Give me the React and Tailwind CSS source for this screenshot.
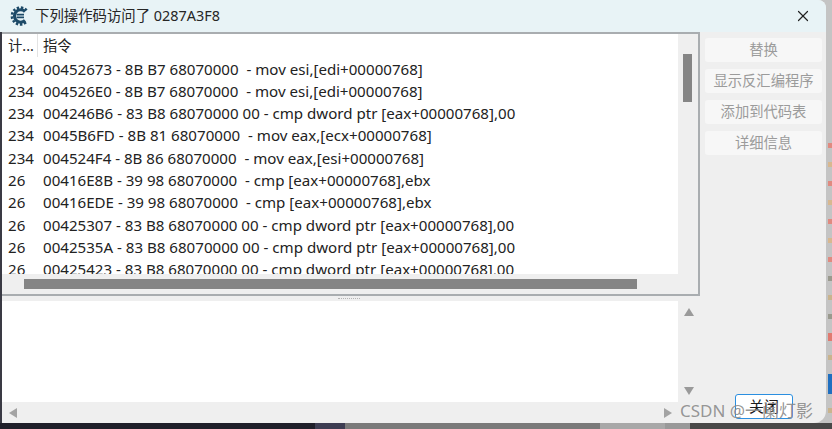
import { X } from 'lucide-react'

const rows = [
  ['234', '00452673 - 8B B7 68070000  - mov esi,[edi+00000768]'],
  ['234', '004526E0 - 8B B7 68070000  - mov esi,[edi+00000768]'],
  ['234', '004246B6 - 83 B8 68070000 00 - cmp dword ptr [eax+00000768],00'],
  ['234', '0045B6FD - 8B 81 68070000  - mov eax,[ecx+00000768]'],
  ['234', '004524F4 - 8B 86 68070000  - mov eax,[esi+00000768]'],
  ['26', '00416E8B - 39 98 68070000  - cmp [eax+00000768],ebx'],
  ['26', '00416EDE - 39 98 68070000  - cmp [eax+00000768],ebx'],
  ['26', '00425307 - 83 B8 68070000 00 - cmp dword ptr [eax+00000768],00'],
  ['26', '0042535A - 83 B8 68070000 00 - cmp dword ptr [eax+00000768],00'],
  ['26', '00425423 - 83 B8 68070000 00 - cmp dword ptr [eax+00000768],00'],
]

const buttons = ['替换', '显示反汇编程序', '添加到代码表', '详细信息']

// scraps of the window behind, seen down the right edge
const stripMarks = [
  ['#e08a80', 5], ['#d8b890', 5], ['#e08a80', 5], ['#d8b890', 5], ['#e08a80', 5], ['#d8b890', 5], ['#e08a80', 5],
  ['#9a9a8e', 5], ['#c9b48e', 5], ['#9a9a8e', 5], ['#e07a70', 8], ['#c9b48e', 5], ['#1f6fc0', 20], ['#c9b48e', 5], ['#9a9a8e', 5],
]

function Logo() {
  return (
    <svg width="20" height="20" viewBox="0 0 20 20" fill="none" stroke="#1d4a68">
      <path d="M16.6 4.4A8.4 8.4 0 1 0 16.6 15.6" strokeWidth="2.6" strokeDasharray="2.4 1.7" />
      <path d="M15 5.6A6.2 6.2 0 1 0 15 14.4" strokeWidth="3" />
      <path d="M6.5 8.6H14M6.5 11.4H14" strokeWidth="1.6" />
    </svg>
  )
}

function Arrow({ dir }) {
  const points = {
    up: '0,8 5,0 10,8',
    down: '0,0 10,0 5,8',
    left: '8,0 8,10 0,5',
    right: '0,0 0,10 8,5',
  }
  const vertical = dir === 'up' || dir === 'down'
  return (
    <svg width={vertical ? 10 : 8} height={vertical ? 8 : 10} className="shrink-0">
      <polygon points={points[dir]} fill={vertical ? '#9a9a9a' : '#a3a3a3'} />
    </svg>
  )
}

export default function App() {
  return (
    <div className="relative flex flex-col w-[832px] h-[429px] overflow-hidden bg-[#c4c4c4] text-[14.3px] text-[#222] font-['Noto_Sans','Noto_Sans_CJK_SC',sans-serif]">
      <div className="flex flex-1 min-h-0">
        {/* Window */}
        <div className="flex flex-col w-[826px] bg-[#efefef] rounded-tr-lg rounded-br-xl overflow-hidden">
          {/* Title bar */}
          <div className="flex items-center h-[32px] shrink-0 bg-[#e8f3f6] pl-[10px] pr-[14px]">
            <Logo />
            <span className="ml-[5px] pb-[1px] text-[14.4px] text-[#262626]">下列操作码访问了 0287A3F8</span>
            <X size={18} strokeWidth={1.6} className="ml-auto text-[#222]" />
          </div>

          <div className="flex flex-1 min-h-0 border-l-2 border-[#3a3a44]">
            <div className="flex flex-col w-[698px] shrink-0">
              {/* Access list */}
              <div className="flex flex-col h-[264px] shrink-0 border-t-2 border-r-2 border-b-2 border-[#a9adb0] bg-[#efefef]">
                <div className="flex flex-1 min-h-0">
                  <div className="flex flex-col w-[676px] bg-white overflow-hidden">
                    <div className="flex items-center h-[25px] shrink-0 pb-[2px]">
                      <span className="flex items-center h-full w-[36px] pl-[6px] border-r border-[#e3e3e3]">计...</span>
                      <span className="pl-[5px]">指令</span>
                    </div>
                    {rows.map((row, i) => (
                      <div key={i} className="flex items-center h-[22.3px] shrink-0 pb-[2px] whitespace-pre leading-none text-[15.1px]">
                        <span className="w-[41px] shrink-0 pl-[6px]">{row[0]}</span>
                        <span>{row[1]}</span>
                      </div>
                    ))}
                  </div>
                  <div className="flex-1 pl-[5px] pt-[20px]">
                    <div className="w-[9px] h-[48px] bg-[#858585]" />
                  </div>
                </div>
                <div className="flex items-center h-[20px] shrink-0 pl-[22px]">
                  <div className="w-[613px] h-[10px] bg-[#858585]" />
                </div>
              </div>

              {/* Splitter */}
              <div className="flex items-center justify-center h-[5px] shrink-0 pr-[4px]">
                <div className="w-[22px] border-t border-dotted border-[#b4b4b4]" />
              </div>

              {/* Lower memo */}
              <div className="flex flex-1 min-h-0 flex-col">
                <div className="flex flex-1 min-h-0">
                  <div className="w-[676px] bg-white" />
                  <div className="flex flex-1 flex-col items-center justify-between pt-[7px] pb-[7px]">
                    <Arrow dir="up" />
                    <Arrow dir="down" />
                  </div>
                </div>
                <div className="flex items-center justify-between h-[21px] shrink-0 pl-[7px] pr-[28px]">
                  <Arrow dir="left" />
                  <Arrow dir="right" />
                </div>
              </div>
            </div>

            {/* Buttons */}
            <div className="flex flex-col flex-1 pl-[5px] pr-[4px] pt-[6px] pb-[4px]">
              {buttons.map((label) => (
                <div key={label} className="flex items-center justify-center h-[24px] mb-[7px] pb-[1px] rounded-[3px] bg-[#f7f7f7] text-[#9b9b9b]">
                  {label}
                </div>
              ))}
              <div className="flex items-center justify-center self-start ml-[30px] mt-auto w-[58px] h-[25px] rounded-[3px] bg-white border border-[#2b8fe0] text-[15px] text-[#1b1b1b]">
                关闭
              </div>
            </div>
          </div>
        </div>

        {/* Window behind, right edge */}
        <div className="flex flex-col flex-1 gap-[14px] pt-[143px] items-end">
          {stripMarks.map(([color, height], i) => (
            <div key={i} className="w-[4px] shrink-0" style={{ backgroundColor: color, height }} />
          ))}
        </div>
      </div>

      {/* Desktop behind, bottom edge */}
      <div className="flex h-[6px] shrink-0">
        <div className="w-[315px] bg-[#1f1f29]" />
        <div className="w-[30px] bg-[#3d3d52]" />
        <div className="w-[255px] bg-[#7a7a7a]" />
        <div className="w-[65px] bg-[#a8a8a8]" />
        <div className="w-[25px] bg-[#999999]" />
        <div className="flex-1 bg-[#484848]" />
      </div>

      {/* Watermark */}
      <span className="absolute left-[680px] top-[398px] text-[17px] text-[#8a8a8a]/90">CSDN @一阑灯影</span>
    </div>
  )
}
